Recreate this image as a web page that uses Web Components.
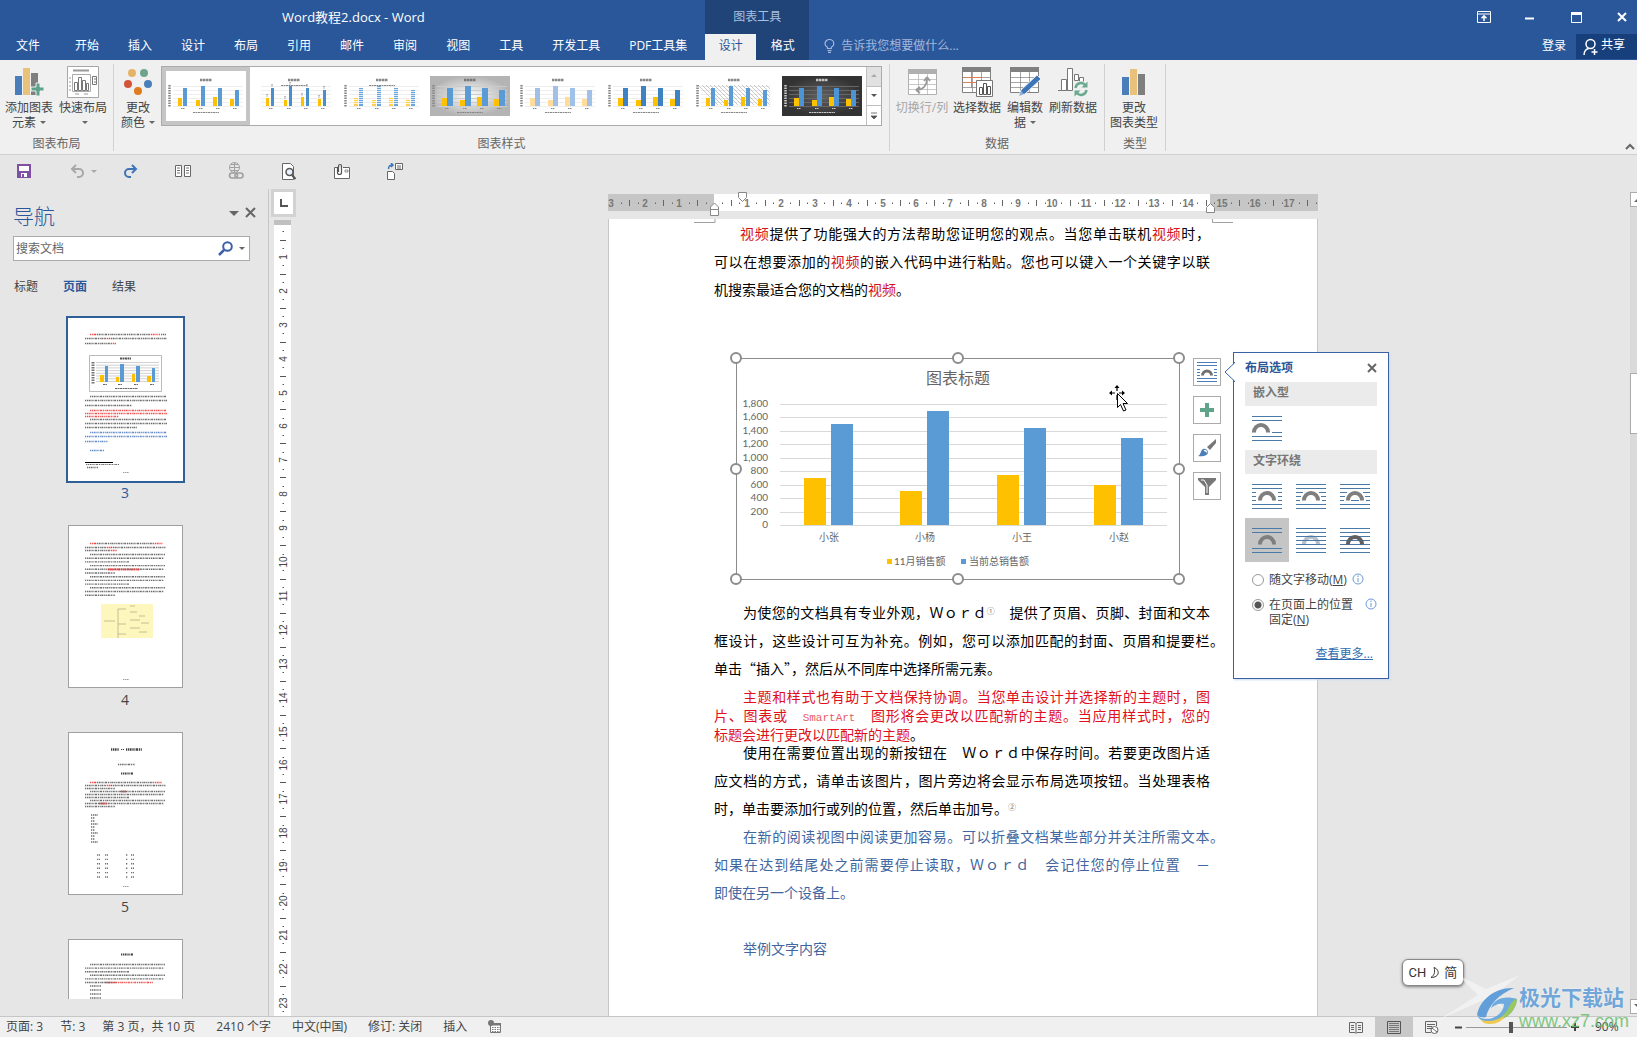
<!DOCTYPE html>
<html lang="zh-CN">
<head>
<meta charset="utf-8">
<title>Word教程2.docx - Word</title>
<style>
html,body{height:100%;margin:0}
body{font:12px/16px "Open Sans","Noto Sans CJK SC",sans-serif;color:#444;background:#e6e6e6;overflow:hidden}
</style>
</head>
<body>
<word-app></word-app>
<script>
const BASE = `*{box-sizing:border-box}
button{font:inherit;color:inherit;background:none;border:0;padding:0;margin:0;cursor:default}
a{color:inherit;text-decoration:none}svg{display:block;flex:none}p{margin:0}`;
function define(name, css, html) {
  const t = document.createElement('template');
  t.innerHTML = `<style>${BASE}${css}</style>${html}`;
  customElements.define(name, class extends HTMLElement {
    constructor() {
      super();
      this.attachShadow({mode: 'open'}).append(t.content.cloneNode(true));
    }
  });
}
const svg = (w, h, body, extra = '') => `<svg width="${w}" height="${h}" viewBox="0 0 ${w} ${h}" fill="none" aria-hidden="true" ${extra}>${body}</svg>`;
const times = (n, f) => Array.from({length: n}, (_, i) => f(i)).join('');

/* ---------- title bar ---------- */
define('title-bar', `
:host{display:flex;height:60px;background:#2a579a;color:#fff;position:relative}
.left{display:flex;flex-direction:column;justify-content:flex-end}
nav{display:flex;gap:1px;padding-left:2px;height:26px}
nav a{padding:0 14px;line-height:24px;white-space:nowrap}
nav a:first-child{margin-right:6px}
.ctx{display:flex;flex-direction:column;width:104px;background:#204478;margin-left:4px}
.ctx b{font-weight:400;color:#a9bfe0;line-height:34px;height:34px;text-align:center}
.ctx div{display:flex;height:26px;line-height:24px;text-align:center}
.ctx a{flex:1}
.ctx a.on{flex:none;width:51px;background:#f0f0f0;color:#2a579a}
h1{margin:0;position:absolute;left:282px;top:7px;font:13px/20px "Open Sans","Noto Sans CJK SC",sans-serif}
.tell{display:flex;align-items:flex-end;gap:6px;padding:0 0 4px 15px;color:#a3b8dc;line-height:20px}
.tell svg{margin-bottom:3px}
.right{margin-left:auto;display:flex;flex-direction:column;align-items:flex-end}
.win{display:flex;gap:16px;height:34px}
.win button{width:30px;display:grid;place-items:center}
.acct{display:flex;align-items:center}
.acct a{line-height:20px;margin:0 10px 2px 0}
.share{display:flex;align-items:center;gap:3px;width:61px;height:25px;padding:0 0 3px 7px;background:#173f7c}
.share svg{margin-top:4px}
`, `
<h1>Word教程2.docx - Word</h1>
<div class="left"><nav>${['文件','开始','插入','设计','布局','引用','邮件','审阅','视图','工具','开发工具','PDF工具集'].map(t => `<a href="#">${t}</a>`).join('')}</nav></div>
<div class="ctx"><b>图表工具</b><div><a href="#" class="on">设计</a><a href="#">格式</a></div></div>
<div class="tell">${svg(11, 14, '<path d="M3.500 9.500V8.300C2 7.400 1 6.400 1 4.700a4.400 4.200 0 0 1 8.800 0c0 1.700-1 2.700-2.500 3.600v1.200zM3.500 11.500h4M4 13.300h3" stroke="#a3b8dc" stroke-width="1.200"/>')}<span>告诉我您想要做什么...</span></div>
<div class="right">
 <div class="win">
  <button aria-label="功能区显示选项">${svg(14, 12, '<path d="M.5.500h13v11H.5zM.5 3h13" stroke="#fff"/><path d="M7 10V5M4.500 7.300 7 4.800l2.500 2.500" stroke="#fff" stroke-width="1.500"/>')}</button>
  <button aria-label="最小化">${svg(10, 6, '<path d="M0 4.500h9" stroke="#fff" stroke-width="2"/>')}</button>
  <button aria-label="最大化">${svg(11, 11, '<path d="M.5.500h10v10H.5z" stroke="#fff"/><path d="M0 0h11v3H0z" fill="#fff"/>')}</button>
  <button aria-label="关闭">${svg(10, 10, '<path d="m1 1 8 8M9 1 1 9" stroke="#fff" stroke-width="2"/>')}</button>
 </div>
 <div class="acct"><a href="#">登录</a><button class="share">${svg(15, 18, '<circle cx="7.500" cy="6" r="4.500" stroke="#fff" stroke-width="1.500"/><path d="M1 17c0-3 1.500-5.500 4.500-6.500M11.500 11v6M8.500 14h6" stroke="#fff" stroke-width="1.500"/>')}共享</button></div>
</div>`);

/* ---------- ribbon ---------- */
define('ribbon-group', `
:host{display:flex;flex-direction:column;margin:4px 0 3px;border-right:1px solid #d0d0d0;height:87px}
.body{display:flex;gap:1px;padding:2px 4px 0 2px;height:72px}
:host([tight]) .body{padding:2px 3px 0 2px;gap:0}
:host([wide]) .body{padding:2px 7px 0 1px;gap:0}
.cap{text-align:center;line-height:15px;color:#666}
`, `<div class="body"><slot></slot></div><div class="cap"><slot name="caption"></slot></div>`);

define('ribbon-button', `
:host{display:block;width:54px}
:host([narrow]){width:40px}
:host([mid]){width:46px}
:host([off]){color:#a6a6a6}
button{width:100%;display:flex;flex-direction:column;align-items:center;gap:2px}
.i{height:32px;display:grid;place-items:center}
.t{line-height:15px;white-space:nowrap}
`, `<button><span class="i"><slot name="icon"></slot></span><span class="t"><slot></slot></span></button>`);

function miniChart(i) {
  const bx = [12, 30, 47, 64], yt = [22, 24, 21, 23], bt = [12, 10, 12, 14];
  const dark = i === 7, gray = i === 3;
  const Y = ['#ffc000','#ffc000','#ffd24d','#ffc000','#ffdc9a','#ffc000','#ffc000','#ffc000'][i];
  const B = ['#5b9bd5','#4a8ecb','#6aa5dc','#5b9bd5','#a0c0e8','#3f82c4','#5b9bd5','#4d94d6'][i];
  const ink = dark ? '#ccc' : '#888', w = i === 1 ? 3 : i === 3 ? 6 : i > 3 && i !== 6 ? 5 : 4;
  let s = '';
  if (gray) s += `<defs><radialGradient id="gg"><stop stop-color="#fff"/><stop offset="1" stop-color="#b4b4b4"/></radialGradient></defs><path fill="url(#gg)" d="M0 0h80v40H0z"/>`;
  if (dark) s += `<defs><radialGradient id="gd"><stop stop-color="#606060"/><stop offset="1" stop-color="#333"/></radialGradient></defs><path fill="url(#gd)" d="M0 0h80v40H0z"/>`;
  s += times(6, k => `<path d="M7 ${10 + k * 4}.5h70" stroke="${dark ? '#666' : gray ? '#ccc' : '#eee'}"/>`);
  if (i === 6) s += `<g stroke="#999" stroke-width=".5">${times(18, k => `<path d="M${4 + k * 4} 9l${Math.min(20, 72 - k * 4)} ${Math.min(20, 72 - k * 4)}"/>`)}</g>`;
  s += bx.map((x, k) => `<path fill="${Y}" d="M${x} ${yt[k]}h${w}V30h-${w}z"/><path fill="${B}" d="M${x + 5} ${bt[k]}h${w}V30h-${w}z"/>` +
    (i === 2 ? times(9, n => `<path stroke="#fff" stroke-width=".8" d="M${x} ${11 + n * 2}.500h9"/>`) : '') +
    (i === 1 ? `<path stroke="#777" stroke-dasharray="1 .5" d="M${x + 6} ${bt[k] - 4}v3M${x + 1} ${yt[k] - 4}v3"/>` : '') +
    `<path stroke="${ink}" stroke-dasharray="1.500 .5" d="M${x + 3} 32.500h4"/>`).join('');
  s += `<path d="M34 4h12" stroke="${dark ? '#fff' : '#555'}" stroke-width="2.500" stroke-dasharray="2.500 .5" opacity=".7"/>`;
  s += `<path d="${i === 1 || i === 2 ? 'M27 9.500h26' : 'M27 36.500h26'}" stroke="${ink}" stroke-dasharray="2 .5"/>`;
  if (i !== 1) s += `<path d="M3.500 9v22" stroke="${ink}" stroke-width="2.500" stroke-dasharray="1.500 1"/>`;
  return svg(80, 40, s);
}
define('style-gallery', `
:host{display:flex;width:721px;height:60px;border:1px solid #ababab;background:#fff}
.it{width:88px;height:58px;display:grid;place-items:center}
.it.on{border:4px solid #c5c5c5}
.sc{display:flex;flex-direction:column;width:15px;border-left:1px solid #c0c0c0}
.sc button{flex:1;display:grid;place-items:center}
.sc button+button{border-top:1px solid #c0c0c0}
.sc button:first-child{background:#e1e1e1}
`, `${times(8, i => `<button class="it${i ? '' : ' on'}" aria-label="样式 ${i + 1}">${miniChart(i)}</button>`)}
<div class="sc"><button aria-label="上一行">${svg(6, 4, '<path d="m0 3 3-3 3 3z" fill="#aaa"/>')}</button><button aria-label="下一行">${svg(6, 4, '<path d="m0 0 3 3 3-3z" fill="#555"/>')}</button><button aria-label="其他">${svg(8, 8, '<path d="M1 1h6M1 4l3 3 3-3z" fill="#555" stroke="#555" stroke-width=".8"/>')}</button></div>`);

const DN = `<svg width="6" height="4" viewBox="0 0 6 4" style="display:inline-block;vertical-align:2px;margin-left:4px"><path d="m0 0 3 3 3-3z" fill="#666"/></svg>`;
const grid = c => `<path d="M.5 1.500h28v24H.5z" fill="#fff" stroke="${c}"/><path d="M0 0h29v5H0z" fill="${c}"/><path d="M1 10.500h27M1 15.500h27M1 20.500h27M10.500 5v20M19.500 5v20" stroke="${c}" stroke-opacity=".7"/>`;
const I = {
  add: svg(30, 30, '<path d="M1 9h7v19H1z" fill="#4a7ebb"/><path d="M9 1h7v27H9z" fill="#e8c17a"/><path d="M17 6h7v22h-7z" fill="#7f7f7f"/><path d="M17 20h5v-4h4v4h4v4h-4v5h-4v-5h-5z" fill="#5fa38a" stroke="#f0f0f0"/>', 'slot="icon"'),
  quick: svg(32, 32, '<path d="M.5.500h31v31H.5z" fill="#fff" stroke="#a6a6a6"/><path d="M6 4.500h16" stroke="#999" stroke-width="2"/><path d="M5.500 8.500h18v17h-18z" stroke="#aaa"/><path d="M7.500 16.500h3v8h-3zM11.500 11.500h3v13h-3zM15.500 14.500h3v10h-3zM19.500 17.500h2v7h-2z" stroke="#777"/><path d="M25.500 10.500h4v8h-4zM27 13h2M27 16h2" stroke="#777"/><path d="M2 12h2M2 16h2M2 20h2M2 24h2M8 28h4M17 28h4" stroke="#999"/>', 'slot="icon"'),
  color: svg(28, 28, '<circle cx="8" cy="5" r="4" fill="#e6b366"/><circle cx="20" cy="5" r="4" fill="#6ca58c"/><circle cx="4" cy="16" r="4" fill="#d2553a"/><circle cx="24" cy="16" r="4" fill="#4a7ebb"/><circle cx="14" cy="23" r="4" fill="#e07b20"/>', 'slot="icon"'),
  swap: svg(29, 27, grid('#b0b0b0') + '<path d="M9 21c6 0 10-5 10-11M19 8l-3 4M19 8l3 4M8 21l4-3M8 21l4 3" stroke="#999" stroke-width="1.800"/>', 'slot="icon"'),
  select: svg(31, 30, grid('#808080') + '<path d="M9.500 5v16M1 10.500h18M1 15.500h13" stroke="#e08050"/><path d="M14.500 13.500h16v16h-16z" fill="#fff" stroke="#777"/><path d="M17.500 20.500h3v7h-3zM21.500 16.500h3v11h-3zM25.500 19.500h3v8h-3z" stroke="#555"/>', 'slot="icon"'),
  edit: svg(31, 30, grid('#808080') + '<path d="m9 29 2-6L27 8l4 4-16 15z" fill="#3e75b8" stroke="#f0f0f0"/><path d="m9 29 2-5 3 3z" fill="#8eb1dc"/>', 'slot="icon"'),
  refresh: svg(31, 30, '<path d="M0 23.500h14" stroke="#777"/><path d="M3.500 12.500h5v11h-5zM9.500 1.500h5v22h-5zM16.500 7.500h4v6h-4zM21.500 10.500h4v4h-4z" fill="#fff" stroke="#777"/><circle cx="23" cy="22" r="8" fill="#f0f0f0"/><path d="M17.500 21a5.500 5.500 0 0 1 10-2.500M28.500 23a5.500 5.500 0 0 1-10 2.500" stroke="#6aa98f" stroke-width="2.400"/><path d="M29.500 14.500v6h-6zM16.500 29.500v-6h6z" fill="#6aa98f"/>', 'slot="icon"'),
  type: svg(24, 26, '<path d="M0 8h7v18H0z" fill="#4a7ebb"/><path d="M8 0h7v26H8z" fill="#e8c17a"/><path d="M16 5h7v21h-7z" fill="#7f7f7f"/>', 'slot="icon"')
};
define('ribbon-bar', `
:host{display:flex;height:95px;background:#f0f0f0;border-bottom:1px solid #d0d0d0}
.first{margin-left:3px}
.col{margin:auto 2px 4px auto}
`, `
<ribbon-group tight><ribbon-button>${I.add}添加图表<br>元素${DN}</ribbon-button><ribbon-button>${I.quick}快速布局<br>${DN}</ribbon-button><span slot="caption">图表布局</span></ribbon-group>
<ribbon-group wide><ribbon-button mid>${I.color}更改<br>颜色${DN}</ribbon-button><style-gallery></style-gallery><span slot="caption">图表样式</span></ribbon-group>
<ribbon-group><ribbon-button off class="first">${I.swap}切换行/列</ribbon-button><ribbon-button>${I.select}选择数据</ribbon-button><ribbon-button narrow>${I.edit}编辑数<br>据${DN}</ribbon-button><ribbon-button>${I.refresh}刷新数据</ribbon-button><span slot="caption">数据</span></ribbon-group>
<ribbon-group><ribbon-button>${I.type}更改<br>图表类型</ribbon-button><span slot="caption">类型</span></ribbon-group>
<button class="col" aria-label="折叠功能区">${svg(10, 7, '<path d="m1 6 4-4 4 4" stroke="#666" stroke-width="2"/>')}</button>`);

/* ---------- quick access ---------- */
define('quick-bar', `
:host{display:flex;gap:37px;height:32px;margin-bottom:2px;padding:0 16px;align-items:center}
button{width:16px;height:18px;display:grid;place-items:center;position:relative}
button:first-child{margin-right:-3px}
.dd{position:absolute;left:22px;top:8px}
`, [
 ['保存', svg(14, 14, '<path d="M1 1h12v12H1z" fill="#fff" stroke="#7e4fa3" stroke-width="2"/><path d="M1 7h12v6H1z" fill="#7e4fa3"/><path d="M4 9h6v4H4z" fill="#fff"/><path d="M5 10h2v3H5z" fill="#7e4fa3"/>')],
 ['撤消', svg(15, 14, '<path d="M2 5h7a4 4 0 0 1 0 8H7" stroke="#a8a8a8" stroke-width="2"/><path d="M6 1 2 5l4 4" stroke="#a8a8a8" stroke-width="2"/>') + svg(6, 4, '<path d="m0 0 3 3 3-3z" fill="#aaa"/>', 'class="dd"')],
 ['重复', svg(15, 14, '<path d="M13 5H6a4 4 0 0 0 0 8h2M9 1l4 4-4 4" stroke="#3e75b8" stroke-width="2"/>')],
 ['并排', svg(16, 12, '<path d="M.5.500h6v11h-6zM9.500.500h6v11h-6z" fill="#fff" stroke="#666"/><path d="M2 3h3M2 5.500h3M2 8h3M11 3h3M11 5.500h3M11 8h3" stroke="#777"/>')],
 ['链接', svg(16, 18, '<circle cx="6.500" cy="5.500" r="5" stroke="#a0a0a0"/><path d="M1.500 5.500h10M6.500.500v10M3 2.500h7M3 8.500h7" stroke="#a0a0a0"/><rect x="1.500" y="11" width="8" height="5" rx="2.500" fill="#e6e6e6" stroke="#a0a0a0" stroke-width="1.600"/><rect x="7" y="11" width="8" height="5" rx="2.500" stroke="#a0a0a0" stroke-width="1.600"/>')],
 ['打印预览', svg(14, 17, '<path d="M.5.500h8l3 3v13H.5z" fill="#fff" stroke="#666"/><circle cx="7.500" cy="9" r="3.500" fill="#e9f1fa" stroke="#555" stroke-width="1.500"/><path d="m10 12 3.500 4" stroke="#555" stroke-width="2"/>')],
 ['附件', svg(16, 17, '<path d="M3 4.500H.5v11h15v-11H9" fill="#fff" stroke="#666"/><path d="M3.500 4v5.500a2 2 0 0 0 4 0V3a1.500 1.500 0 0 0-3 0v6" stroke="#555" stroke-width="1.200"/><path d="M11 7h3v2h-3z" stroke="#777" stroke-width=".8"/>')],
 ['插入', svg(17, 17, '<path d="M8.500.500h7v6h-7zM10 3h4M10 5h4" fill="#fff" stroke="#666"/><path d="M.5 8.500h5l2 2v6h-7z" fill="#fff" stroke="#666"/><path d="M1.500 6c0-3 1-4 4-4M4 0l2 2-2 2" stroke="#3e75b8" stroke-width="1.500"/>')]
].map(([n, g]) => `<button aria-label="${n}">${g}</button>`).join(''));

/* ---------- navigation pane ---------- */
const rows = (list) => list.map(([x, y, w, c, s]) => `<path d="M${x} ${y}h${w}" stroke="${c}" stroke-width="${s || 1.4}" stroke-dasharray="1.300 .7 1 .6 2 .8" opacity=".85"/>`).join('');
const K = '#555', R = '#e33', L = '#4a78c0';
const para = (y, d, n) => { const a = []; let k = 0;
  for (let p = 0; p < n; p++) for (let i = 0; i < 3; i++, k++) a.push([i ? 16 : 21, y + k * d, i === 2 ? (p % 2 ? 30 : 44) : i ? 79 : 75, K]);
  return a; };
const pages = {
  3: rows([[21,15.5,5,R],[26,15.5,54,K],[80,15.5,11,R],[92,15.5,5,K],[16,19.5,20,K],[36,19.5,4,R],[40,19.5,58,K],[16,24.5,26,K],[42,24.5,5,R],
     [21,77.5,76,K],[16,81.5,82,K],[16,86.5,47,K],[21,91.5,76,R],[16,94.5,82,R],[16,97.5,34,R],[21,100.5,76,K],[16,104.5,82,K],[16,108.5,52,K],[21,113.5,77,L],[16,117.5,82,L],[16,122.5,23,L],[21,131.5,14,L],[17,145.5,33,K,1],[18,148.5,11,K],[54,153.5,6,'#888',1]]) +
     '<path d="M16 143.500h28" stroke="#000"/><path d="M20.500 36.500h72v36h-72z" fill="#fff" stroke="#aaa" stroke-width=".8"/><path d="M51 39.500h11" stroke="#555" stroke-width="2" stroke-dasharray="2 .5"/>' +
     times(8, k => `<path d="M27 ${43.5 + k * 2.7}h63" stroke="#bbb" stroke-width=".7"/>`) + '<path d="M24 43v22" stroke="#777" stroke-width="3" stroke-dasharray="1.500 1"/>' +
     '<path d="M31 56h4v7h-4zM47 58h3v5h-3zM63 55h3v8h-3zM78 57h4v6h-4z" fill="#ffc000"/><path d="M36 47h3v16h-3zM51 45h4v18h-4zM67 47h4v16h-4zM83 49h3v14h-3z" fill="#5b9bd5"/><path d="M34 65.500h4M49 65.500h4M65 65.500h4M81 65.500h4M46 69.500h23" stroke="#666" stroke-dasharray="2 .5"/>',
  4: rows([[21,17.5,5,R],[84,17.5,10,R],[36,21.5,6,R],[26,17.5,58,K],[16,21.5,20,K],[42,21.5,55,K],[16,24.5,24,K],[40,24.5,8,R]].concat(para(28.5, 3.7, 4))) + rows([[39,43.5,32,R,2]]) +
     '<path d="M32 78h52v34H32z" fill="#fdf6bd"/><path d="M35 95h11M49 83v29M49 83h8M49 98h8M49 108h8M61 80h5M61 86h7M61 94h10M61 102h10M70 90h6M72 97h8M70 106h8" stroke="#b8b08a" stroke-width=".8"/>' + rows([[54,153.5,6,'#888',1]]),
  5: rows([[42,16.5,8,'#222',2.5],[52,16.5,3,'#222',1],[57,16.5,16,'#222',2.5],[49,31.5,17,K],[52,40.5,12,'#222',2]].concat([[21,49.5,5,R],[84,49.5,9,R],[36,52.5,6,R],[26,49.5,58,K],[16,52.5,20,K],[42,52.5,55,K],[16,55.5,30,K]], para(58.5, 3, 2), Array.from({length: 10}, (_, i) => [22, 82 + i * 3, i % 3 ? 4 : 7, K]),
     Array.from({length: 6}, (_, i) => [28, 122 + i * 4.4, 3, K]), Array.from({length: 6}, (_, i) => [36, 122 + i * 4.4, 3, K]), Array.from({length: 6}, (_, i) => [57, 122 + i * 4.4, 2, K]), Array.from({length: 6}, (_, i) => [62, 122 + i * 4.4, 3, K]), [[54,153.5,6,'#888',1]])) + rows([[52,58.5,5,R,2],[30,70.5,8,R,2]]),
  6: rows([[52,14.5,12,'#222',2]].concat(para(24.5, 3.6, 2), [[36,42.5,48,R]], Array.from({length: 5}, (_, i) => [21, 46 + i * 4, 11, K])))
};
define('nav-pane', `
:host{display:flex;flex-direction:column;width:269px;border-right:1px solid #c6c6c6;padding:13px 18px 17px 13px;overflow:hidden}
header{display:flex;align-items:center;height:28px;margin-right:-7px;color:#2b579a}
h2{margin:0;font:300 21px/28px "Open Sans","Noto Sans CJK SC",sans-serif;flex:1}
header button{display:grid;place-items:center;height:16px;margin:-6px 0 0 6px}
.s{display:flex;align-items:center;margin-top:6px;height:25px;border:1px solid #ababab;background:#fff;padding:0 4px 0 2px}
input{flex:1;min-width:0;border:0;outline:0;padding:0;background:none;font:inherit;color:#555}
input::placeholder{color:#666;opacity:1}
.s button{margin-left:6px}
nav{display:flex;gap:25px;margin-top:18px;line-height:16px;padding-left:1px}
nav .on{font-weight:700;color:#2b579a}
.list{flex:1;min-height:0;overflow:hidden;margin-top:20px;padding:3px 0 0 7px;display:flex;flex-direction:column;align-items:center}
.pg{flex:none;height:207px;text-align:center;font-size:14px;line-height:24px;width:115px;margin-right:20px}
.pg div{height:163px;border:1px solid #a0a0a0;background:#fff;overflow:hidden}
.pg.on div{border-color:#fff;outline:2px solid #2f5f97}
.pg.on{color:#2b579a}
`, `
<header><h2>导航</h2><button aria-label="任务窗格选项">${svg(10, 5, '<path d="m0 0 5 5 5-5z" fill="#666"/>')}</button><button aria-label="关闭窗格">${svg(12, 12, '<path d="m1 1 9 9M10 1 1 10" stroke="#666" stroke-width="2"/>')}</button></header>
<div class="s"><input type="text" placeholder="搜索文档" aria-label="搜索文档"><button aria-label="搜索">${svg(15, 15, '<circle cx="9.500" cy="5.500" r="4.300" stroke="#3c5fa8" stroke-width="2"/><path d="m6 9-5 5" stroke="#3c5fa8" stroke-width="2.500"/>')}</button><button aria-label="搜索选项">${svg(6, 4, '<path d="m0 0 3 3 3-3z" fill="#666"/>')}</button></div>
<nav><a href="#">标题</a><a href="#" class="on">页面</a><a href="#">结果</a></nav>
<div class="list">${[3, 4, 5, 6].map(n => `<div class="pg${n === 3 ? ' on' : ''}"><div>${svg(113, 161, pages[n])}</div>${n < 6 ? n : ''}</div>`).join('')}</div>`);

/* ---------- rulers ---------- */
const PITCH = 33.9;
function hRuler() {
  let s = '<path d="M0 0h710v17H0z" fill="#c6c6c6"/><path d="M106 0h496v17H106z" fill="#fff"/>';
  for (let q = -12; q <= 71; q++) {
    const x = 106 + q * PITCH / 4;
    if (x > 708 || q === 0) continue;
    if (q % 4 === 0) s += `<text x="${Math.round(x) - 1}" y="13" text-anchor="middle">${Math.abs(q / 4)}</text>`;
    else s += q % 2 === 0 ? `<path d="M${Math.round(x)}.5 6v6" stroke="#666"/>` : `<path d="M${Math.round(x)}.5 8.500v1.500" stroke="#666"/>`;
  }
  return s;
}
function vRuler() {
  let s = '<path d="M0 0h17v5H0z" fill="#c0c0c0"/>';
  for (let q = 1; q < 94; q++) {
    const r = Math.round(3 + q * PITCH / 4);
    if (q % 4 === 0) s += `<text transform="translate(13 ${r}) rotate(-90)" text-anchor="middle">${q / 4}</text>`;
    else s += q % 2 === 0 ? `<path d="M6 ${r}.5h6" stroke="#555"/>` : `<path d="M8.500 ${r}.5h1.500" stroke="#555"/>`;
  }
  return s;
}
define('side-ruler', `
:host{display:flex;flex-direction:column;width:27px;padding-left:2px;overflow:hidden}
button{width:25px;height:28px;border:3px solid #d2d2d2;background:#fff;display:grid;place-items:center;flex:none}
.r{margin:3px 0 0 3px;width:17px;flex:1;background:#fff;overflow:hidden}
text{font:10px "Liberation Sans",sans-serif;fill:#444}
`, `<button aria-label="制表符">${svg(8, 8, '<path d="M1 0v7h7" stroke="#555" stroke-width="2"/>')}</button><div class="r">${svg(17, 800, vRuler())}</div>`);
define('top-ruler', `
:host{display:block;width:710px;height:17px;margin-top:5px;position:relative}
text{font:bold 10px "Liberation Sans",sans-serif;fill:#777}
.m{position:absolute;left:0;top:-3px}
`, `${svg(710, 17, hRuler())}${svg(710, 30, '<path d="M130.500 1.500h8v5l-4 4-4-4zM102.500 18.500v-2.500l4-4 4 4v2.500zM102.500 18.500h8v6h-8zM598.500 21.500v-5l4-4 4 4v5z" fill="#fff" stroke="#888"/>', 'class="m"')}`);

/* ---------- chart ---------- */
const AX = [1800, 1600, 1400, 1200, 1000, 800, 600, 400, 200, 0];
const val = v => 167 - v * 121 / 1800;
const cats = [['小张', 93, 700, 1500], ['小杨', 189, 500, 1700], ['小王', 286, 750, 1450], ['小赵', 383, 600, 1300]];
define('sales-chart', `
:host{display:block;width:444px;height:222px;position:relative}
svg{overflow:visible}
text{font:10px Lato,"Noto Sans CJK SC",sans-serif;fill:#666}
.h{font-size:16px}
`, svg(444, 222, `<path d="M.5.500h443v221H.5z" fill="#fff" stroke="#8c8c8c"/>
<text class="h" x="222" y="26" text-anchor="middle">图表标题</text>` +
AX.map(v => `<path d="M44 ${Math.round(val(v))}.5h387" stroke="#d9d9d9"/><text x="32" y="${Math.round(val(v)) + 3}" text-anchor="end">${v.toLocaleString('en-US')}</text>`).join('') +
cats.map(([n, c, a, b]) => `<rect x="${c - 25}" y="${Math.round(val(a))}" width="22" height="${167 - Math.round(val(a))}" fill="#ffc000"/><rect x="${c + 2}" y="${Math.round(val(b))}" width="22" height="${167 - Math.round(val(b))}" fill="#5b9bd5"/><text x="${c}" y="183" text-anchor="middle">${n}</text>`).join('') +
`<path d="M151 201h5v5h-5z" fill="#ffc000"/><text x="158" y="207">11月销售额</text><path d="M225 201h5v5h-5z" fill="#5b9bd5"/><text x="233" y="207">当前总销售额</text>` +
[[0,0],[222,0],[443,0],[0,111],[443,111],[0,221],[222,221],[443,221]].map(([x, y]) => `<circle cx="${x}" cy="${y}" r="5" fill="#fff" stroke="#8c8c8c" stroke-width="2"/>`).join('') +
`<g><path d="M381 28v14M374 35h14" stroke="#000" stroke-width="1.200" stroke-dasharray="5 4"/><path d="m378.500 30 2.500-3 2.500 3zM376 32.500l-3 2.500 3 2.500zM386 32.500l3 2.500-3 2.500z" fill="#000"/><path d="M381.500 35.500v14l3-3 3 6.500 2.500-1-3-6.500h4.500z" fill="#fff" stroke="#000"/></g>`));

const arch = (cx, c) => `<path d="M${cx - 7} 16.500v-.5a7 7 0 0 1 14 0v.5" stroke="${c}" stroke-width="4"/>`;
const ln = (y, a, b) => `<path d="M${a} ${y}.5h${b - a}" stroke="#4a7ba8"/>`;
const frame = ln(0, 0, 30) + ln(4, 0, 30) + ln(20, 0, 30) + ln(24, 0, 30);
const wraps = {
  inline: frame + ln(16, 20, 30) + arch(9, '#7f7f7f'),
  square: frame + [8, 12, 16].map(y => ln(y, 0, 4) + ln(y, 26, 30)).join('') + arch(15, '#7f7f7f'),
  tight: frame + ln(8, 0, 7) + ln(8, 23, 30) + ln(12, 0, 5) + ln(12, 25, 30) + ln(16, 0, 4) + ln(16, 26, 30) + arch(15, '#7f7f7f'),
  through: frame + ln(8, 0, 7) + ln(8, 23, 30) + ln(12, 0, 5) + ln(12, 25, 30) + ln(16, 0, 4) + ln(16, 11, 19) + ln(16, 26, 30) + arch(15, '#7f7f7f'),
  topbottom: frame + arch(15, '#7f7f7f'),
  behind: arch(15, '#b9bfca') + frame + ln(8, 0, 30) + ln(12, 0, 30) + ln(16, 0, 30),
  front: frame + ln(8, 0, 30) + ln(12, 0, 30) + ln(16, 0, 30) + arch(15, '#606060')
};
define('chart-tools', `
:host{display:flex;flex-direction:column;gap:10px}
button{width:28px;height:28px;border:1px solid #ababab;background:#fff;display:grid;place-items:center}
`, [
 ['布局选项', svg(20, 20, '<path d="M0 .5h20M0 3.500h20M0 16.500h20M0 19.500h20M0 7.500h3M0 10.500h3M0 13.500h3M17 7.500h3M17 10.500h3M17 13.500h3" stroke="#4a7ebb"/><path d="M5.500 13.500a4.500 4.500 0 0 1 9 0" stroke="#707070" stroke-width="3"/>')],
 ['图表元素', svg(14, 14, '<path d="M7 0v14M0 7h14" stroke="#5fa38a" stroke-width="4"/>')],
 ['图表样式', svg(18, 18, '<path d="M18 0v4l-6 7-3-3z" fill="#777"/><path d="M0 17c3-1 2-5 5-7 2-1 5 1 5 3 0 4-6 5-10 4z" fill="#4a7ebb"/><path d="M6 12c1-1 3 0 2.500 1.500" stroke="#fff" stroke-width="1.500"/>')],
 ['图表筛选器', svg(18, 17, '<path d="M0 0h18v2l-7 7v8H7V9L0 2z" fill="#777"/><path d="M3 2h3l3 5v8" stroke="#fff"/>')]
].map(([n, g]) => `<button aria-label="${n}">${g}</button>`).join(''));

const info = svg(12, 12, '<circle cx="6" cy="6" r="5" stroke="#6c9bd8"/><path d="M6 5v4M6 2.500v1.500" stroke="#6c9bd8"/>');
define('layout-popup', `
:host{display:block;width:156px;border:1px solid #3a62a3;background:#fff;padding:5px 11px 16px;box-shadow:1px 1px 2px #c8d8f0;color:#444}
.beak{position:absolute;left:-11px;top:9px}
header{display:flex;justify-content:space-between;align-items:center;height:20px;color:#2b579a;font-weight:700;line-height:16px;margin-bottom:4px}
h3{margin:0;background:#ebebeb;height:24px;font:bold 12px/22px "Open Sans","Noto Sans CJK SC",sans-serif;padding-left:8px;color:#777}
.g{display:flex;flex-wrap:wrap}
.g button{width:44px;height:44px;display:grid;place-items:center}
.g .on{background:#c5c5c5}
.r{display:flex;align-items:flex-start;gap:5px;line-height:15px;padding-left:7px;margin-top:10px}
.r input{appearance:none;margin:2px 0 0;flex:none;width:12px;height:12px;border:1px solid #999;border-radius:50%;background:#fff}
.r input:checked{background:radial-gradient(circle,#555 3px,#fff 4px)}
.r svg{margin-top:1px}
.r.b svg{margin-left:auto}
.more{display:block;text-align:right;color:#2e6db0;text-decoration:underline;margin:19px 4px 0 0;line-height:16px}
`, `
${svg(12, 20, '<path d="M11.500 0v1L2 10l9.500 9v1" fill="#fff" stroke="#3a62a3"/>', 'class="beak"')}
<header><span>布局选项</span><button aria-label="关闭">${svg(10, 10, '<path d="m1 1 8 8M9 1 1 9" stroke="#666" stroke-width="2"/>')}</button></header>
<h3>嵌入型</h3><div class="g"><button aria-label="嵌入型">${svg(30, 25, wraps.inline)}</button></div>
<h3>文字环绕</h3><div class="g">${[['square','四周型'],['tight','紧密型'],['through','穿越型'],['topbottom','上下型'],['behind','衬于文字下方'],['front','浮于文字上方']].map(([k, n]) => `<button class="${k === 'topbottom' ? 'on' : ''}" aria-label="${n}">${svg(30, 25, wraps[k])}</button>`).join('')}</div>
<div class="r"><input type="radio" name="pos" id="mv"><label for="mv">随文字移动(<u>M</u>)</label>${info}</div>
<div class="r b"><input type="radio" name="pos" id="fx" checked><label for="fx">在页面上的位置<br>固定(<u>N</u>)</label>${info}</div>
<a class="more" href="#">查看更多...</a>`);

/* ---------- document page ---------- */
define('doc-page', `
:host{display:block;position:relative;width:710px;flex:1;min-height:0;margin-top:8px;background:#fff;border:solid #c6c6c6;border-width:0 1px;padding:0 107px 0 105px;color:#000}
p{font:14px/28px "Noto Sans CJK SC",sans-serif}
p span.l{display:block;white-space:nowrap;text-align:justify;text-align-last:justify}
p span.e{text-align-last:left}
.l.i{padding-left:29px}.l.j{padding-left:26px}
.l.h{margin-right:-14px}
i{font-style:normal;color:#d4111b}
small{font-size:8px;line-height:8px;vertical-align:4px;color:#777}
.red{color:#e0101c;line-height:19px;margin:5px 0 -6px}
.red em{font:11px/11px "Liberation Mono",monospace;opacity:.7}
.red b{font-weight:400;color:#000}
.blue{color:#41669f}
.obj{position:relative;margin:55px 0 18px 22px}
chart-tools{position:absolute;left:457px;top:0}
layout-popup{position:absolute;left:497px;top:-6px;z-index:2}
.mk{position:absolute;left:0;top:0}
`, `
${svg(708, 6, '<path d="M85 3.500h21V0M603.500 0v3.500H624" stroke="#a0a0a0"/>', 'class="mk"')}
<p><span class="l j"><i>视频</i>提供了功能强大的方法帮助您证明您的观点。当您单击联机<i>视频</i>时，</span>
<span class="l">可以在想要添加的<i>视频</i>的嵌入代码中进行粘贴。您也可以键入一个关键字以联</span>
<span class="l e">机搜索最适合您的文档的<i>视频</i>。</span></p>
<div class="obj"><sales-chart></sales-chart><chart-tools></chart-tools><layout-popup></layout-popup></div>
<p><span class="l i">为使您的文档具有专业外观，Ｗｏｒｄ<small>①</small>　提供了页眉、页脚、封面和文本</span>
<span class="l h">框设计，这些设计可互为补充。例如，您可以添加匹配的封面、页眉和提要栏。</span>
<span class="l e">单击“插入”，然后从不同库中选择所需元素。</span></p>
<p class="red"><span class="l i">主题和样式也有助于文档保持协调。当您单击设计并选择新的主题时，图</span>
<span class="l">片、图表或　<em>SmartArt</em>　图形将会更改以匹配新的主题。当应用样式时，您的</span>
<span class="l e">标题会进行更改以匹配新的主题<b>。</b></span></p>
<p><span class="l i">使用在需要位置出现的新按钮在　Ｗｏｒｄ中保存时间。若要更改图片适</span>
<span class="l">应文档的方式，请单击该图片，图片旁边将会显示布局选项按钮。当处理表格</span>
<span class="l e">时，单击要添加行或列的位置，然后单击加号。<small>②</small></span></p>
<p class="blue"><span class="l i h">在新的阅读视图中阅读更加容易。可以折叠文档某些部分并关注所需文本。</span>
<span class="l">如果在达到结尾处之前需要停止读取，Ｗｏｒｄ　会记住您的停止位置　－</span>
<span class="l e">即使在另一个设备上。</span><br>
<span class="l e i">举例文字内容</span></p>`);

define('doc-scroll', `
:host{display:flex;flex-direction:column;width:7px;margin:3px 0 2px;background:#dadada;overflow:hidden}
button{width:15px;height:15px;border:1px solid #ababab;background:#fff;display:grid;place-items:center;flex:none}
i{display:block;width:15px;height:61px;margin:166px 0 auto;border:1px solid #ababab;background:#fff}
`, `<button aria-label="向上">${svg(8, 5, '<path d="m0 5 4-4 4 4z" fill="#666"/>')}</button><i></i><button aria-label="向下">${svg(8, 5, '<path d="m0 0 4 4 4-4z" fill="#666"/>')}</button>`);

define('doc-area', `
:host{display:flex;flex:1;min-width:0}
main{flex:1;min-width:0;display:flex;flex-direction:column;align-items:center}
`, `<side-ruler></side-ruler><main><top-ruler></top-ruler><doc-page></doc-page></main><doc-scroll></doc-scroll>`);

/* ---------- status bar ---------- */
define('status-bar', `
:host{display:flex;align-items:flex-start;height:21px;border-top:1px solid #c6c6c6;background:#f0f0f0;line-height:19px;padding-left:6px;white-space:nowrap}
.l{display:flex;gap:17px;align-items:center;flex:1}
.l span:nth-child(n+3){margin-right:4px}
.v{width:38px;height:20px;display:grid;place-items:center}
.v.on{background:#c8c8c8}
.z{width:14px;height:20px;display:grid;place-items:center}
input{appearance:none;width:101px;height:13px;margin:4px 1px 0;background:linear-gradient(#999,#999) center/100% 1px no-repeat}
input::-webkit-slider-thumb{appearance:none;width:4px;height:11px;background:#555}
output{width:55px;padding-left:13px}
`, `
<div class="l"><span>页面: 3</span><span>节: 3</span><span>第 3 页，共 10 页</span><span>2410 个字</span><span>中文(中国)</span><span>修订: 关闭</span><span>插入</span>${svg(13, 13, '<path d="M2.500 3.500h10v9h-10z" fill="#fff" stroke="#777"/><path d="M5 3h8v2.500H5z" fill="#777"/><circle cx="3" cy="3" r="3" fill="#777"/><path d="M4 7.500h8M4 9.500h8M4 11.500h8" stroke="#777" stroke-dasharray="1.500 1"/>')}</div>
<button class="v" aria-label="阅读视图">${svg(14, 13, '<path d="M.5 1.500h5.500l1 1 1-1h5.500v10H8l-1 1-1-1H.5zM7 2v10" stroke="#666"/><path d="M2 4.500h3M2 6.500h3M2 8.500h3M9 4.500h3M9 6.500h3M9 8.500h3" stroke="#666"/>')}</button>
<button class="v on" aria-label="页面视图">${svg(14, 13, '<path d="M.5.500h13v12H.5z" stroke="#555"/><path d="M2 2.500h10M2 4.500h10M2 6.500h10M2 8.500h10M2 10.500h10" stroke="#777"/>')}</button>
<button class="v" aria-label="Web 版式视图">${svg(14, 13, '<path d="M6 11.500H.5V.500h11V5" stroke="#666"/><path d="M2 3.500h8M2 5.500h5M2 7.500h4" stroke="#666"/><circle cx="9.500" cy="9" r="3.500" fill="#fff" stroke="#666"/><path d="m7 7 5 4" stroke="#666"/>')}</button>
<button class="z" aria-label="缩小">${svg(7, 3, '<path d="M0 1.500h7" stroke="#444" stroke-width="2"/>')}</button><input type="range" min="10" max="190" value="90" aria-label="缩放"><button class="z" aria-label="放大">${svg(8, 8, '<path d="M4 0v8M0 4h8" stroke="#444" stroke-width="2"/>')}</button><output>90%</output>`);

/* ---------- overlays ---------- */
define('ime-pill', `
:host{display:flex;align-items:center;justify-content:center;gap:4px;width:62px;height:27px;border:1px solid #888;border-radius:6px;background:#fff;box-shadow:0 1px 3px #777;font-family:Roboto,"Noto Sans CJK SC",sans-serif;font-size:13px;color:#333}
`, `<span>CH</span>${svg(10, 11, '<path d="M4 .5c6 2 6 10-3 10 3-2 4.500-5 3-10z" stroke="#333"/>')}<span>简</span>`);
define('site-mark', `
:host{display:flex;align-items:flex-start;opacity:.85}
.t{display:flex;flex-direction:column;margin:-3px 0 0 1px}
b{font:bold 21px/24px "Noto Sans CJK SC",sans-serif;color:#5c9bd6;text-shadow:0 0 2px #fff}
span{font:18px/20px "Liberation Sans",sans-serif;color:#6bbf6e;margin-top:3px}
.ray{position:absolute;left:-36px;top:-14px;z-index:-1}
`, `${svg(80, 46, '<path d="M0 46 38 22 18 2l28 14 34-14-26 20 10 14-18-10z" fill="#fff" opacity=".55"/>', 'class="ray"')}
${svg(42, 38, '<path d="M38 1C20 0 4 12 1 28c2 2 6 3 9 2 3-12 12-22 28-29z" fill="#4b93d8"/><path d="M1 28c5 6 18 5 24-3 2-3 3-5 3-8-5-1-9 1-13 4 3-9 13-13 26-9-1 13-12 22-27 23C8 35 3 33 1 28z" fill="#5aa0dc"/><path d="M41 12c-1 13-12 22-27 23 10-3 16-8 19-15 2-4 4-7 8-8z" fill="#8cc34a"/><path d="M5 33c8 2 17 1 24-5-2 6-8 9-15 9-4 0-7-1-9-4z" fill="#f2c230"/>')}
<div class="t"><b>极光下载站</b><span>www.xz7.com</span></div>`);

define('word-app', `
:host{display:flex;flex-direction:column;height:100vh;position:relative;overflow:hidden}
.work{flex:1;min-height:0;display:flex}
ime-pill{position:absolute;right:173px;bottom:51px}
site-mark{position:absolute;right:8px;bottom:6px;z-index:1}
`, `<title-bar></title-bar><ribbon-bar></ribbon-bar><quick-bar></quick-bar><div class="work"><nav-pane></nav-pane><doc-area></doc-area></div><status-bar></status-bar><ime-pill></ime-pill><site-mark></site-mark>`);
</script>
</body>
</html>
